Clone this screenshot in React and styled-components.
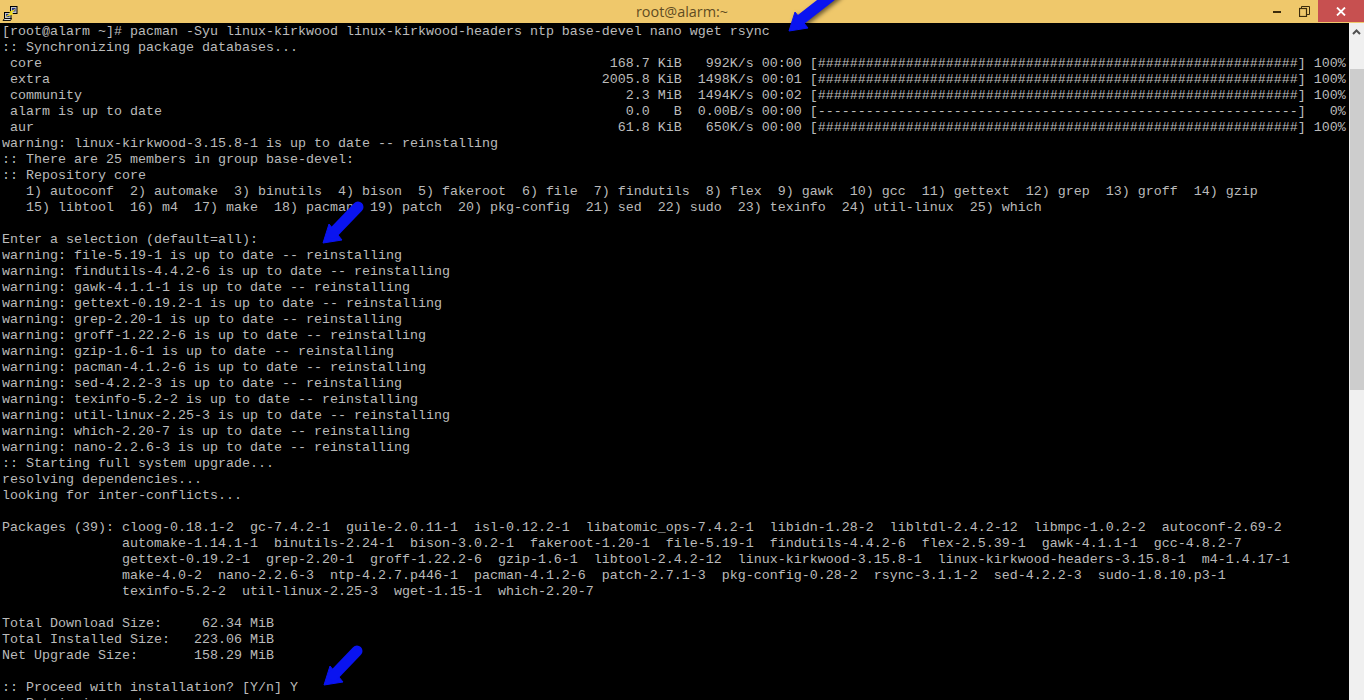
import React from 'react';
import styled, { createGlobalStyle } from 'styled-components';

const GlobalStyle = createGlobalStyle`
  html, body {
    margin: 0;
    padding: 0;
    height: 100%;
    overflow: hidden;
    background: #000;
  }
`;

const Window = styled.div`
  position: relative;
  display: flex;
  flex-direction: column;
  height: 100vh;
  overflow: hidden;
`;

const TitleBar = styled.div`
  position: relative;
  display: flex;
  align-items: center;
  justify-content: space-between;
  flex: 0 0 23px;
  background: #efc86b;
`;

const AppIcon = styled.svg`
  display: block;
  width: 16px;
  height: 16px;
  margin: 2px 0 0 2px;
`;

const Title = styled.div`
  position: absolute;
  left: 0;
  right: 0;
  top: 2px;
  text-align: center;
  font-family: 'Open Sans', 'Noto Sans', sans-serif;
  font-size: 14.4px;
  line-height: 20px;
  color: #5f4c22;
`;

const Controls = styled.div`
  display: flex;
  height: 22px;
  align-self: flex-start;
`;

const ControlButton = styled.div`
  display: flex;
  align-items: center;
  justify-content: center;
  width: ${(p) => p.$width}px;
  background: ${(p) => p.$bg || 'transparent'};
`;

const Body = styled.div`
  display: flex;
  flex: 1;
  min-height: 0;
`;

const Terminal = styled.div`
  flex: 1;
  min-width: 0;
  padding: 1px 0 0 2px;
  overflow: hidden;
  background: #000;
  color: #bbbbbb;
  font-family: 'Liberation Mono', 'DejaVu Sans Mono', monospace;
  font-size: 13.333px;
`;

const Line = styled.div`
  height: 16px;
  line-height: 16px;
  white-space: pre;
`;

const Scrollbar = styled.div`
  flex: 0 0 15px;
  background: #f0f0f0;
`;

const ScrollButton = styled.div`
  display: flex;
  align-items: center;
  justify-content: center;
  height: 17px;
  margin-bottom: 29px;
`;

const ScrollThumb = styled.div`
  height: 321px;
  margin-left: 1px;
  background: #cdcdcd;
`;

const Arrow = styled.svg`
  position: absolute;
  left: ${(p) => p.$tipX - 4}px;
  top: ${(p) => p.$tipY - 56}px;
  width: 60px;
  height: 60px;
  filter: drop-shadow(2px 2px 2px rgba(0, 0, 0, 0.55));
`;

const hashes = '#'.repeat(60);
const dashes = '-'.repeat(60);

const repoRow = (name, size, unit, rate, time, bar, pct) =>
  ' ' + name.padEnd(74) + size.padStart(6) + ' ' + unit.padStart(3) + rate.padStart(9) + ' ' + time + ' [' + bar + '] ' + pct.padStart(4);

const lines = [
  '[root@alarm ~]# pacman -Syu linux-kirkwood linux-kirkwood-headers ntp base-devel nano wget rsync',
  ':: Synchronizing package databases...',
  repoRow('core', '168.7', 'KiB', '992K/s', '00:00', hashes, '100%'),
  repoRow('extra', '2005.8', 'KiB', '1498K/s', '00:01', hashes, '100%'),
  repoRow('community', '2.3', 'MiB', '1494K/s', '00:02', hashes, '100%'),
  repoRow('alarm is up to date', '0.0', 'B', '0.00B/s', '00:00', dashes, '0%'),
  repoRow('aur', '61.8', 'KiB', '650K/s', '00:00', hashes, '100%'),
  'warning: linux-kirkwood-3.15.8-1 is up to date -- reinstalling',
  ':: There are 25 members in group base-devel:',
  ':: Repository core',
  '   1) autoconf  2) automake  3) binutils  4) bison  5) fakeroot  6) file  7) findutils  8) flex  9) gawk  10) gcc  11) gettext  12) grep  13) groff  14) gzip',
  '   15) libtool  16) m4  17) make  18) pacman  19) patch  20) pkg-config  21) sed  22) sudo  23) texinfo  24) util-linux  25) which',
  '',
  'Enter a selection (default=all):',
  'warning: file-5.19-1 is up to date -- reinstalling',
  'warning: findutils-4.4.2-6 is up to date -- reinstalling',
  'warning: gawk-4.1.1-1 is up to date -- reinstalling',
  'warning: gettext-0.19.2-1 is up to date -- reinstalling',
  'warning: grep-2.20-1 is up to date -- reinstalling',
  'warning: groff-1.22.2-6 is up to date -- reinstalling',
  'warning: gzip-1.6-1 is up to date -- reinstalling',
  'warning: pacman-4.1.2-6 is up to date -- reinstalling',
  'warning: sed-4.2.2-3 is up to date -- reinstalling',
  'warning: texinfo-5.2-2 is up to date -- reinstalling',
  'warning: util-linux-2.25-3 is up to date -- reinstalling',
  'warning: which-2.20-7 is up to date -- reinstalling',
  'warning: nano-2.2.6-3 is up to date -- reinstalling',
  ':: Starting full system upgrade...',
  'resolving dependencies...',
  'looking for inter-conflicts...',
  '',
  'Packages (39): cloog-0.18.1-2  gc-7.4.2-1  guile-2.0.11-1  isl-0.12.2-1  libatomic_ops-7.4.2-1  libidn-1.28-2  libltdl-2.4.2-12  libmpc-1.0.2-2  autoconf-2.69-2',
  '               automake-1.14.1-1  binutils-2.24-1  bison-3.0.2-1  fakeroot-1.20-1  file-5.19-1  findutils-4.4.2-6  flex-2.5.39-1  gawk-4.1.1-1  gcc-4.8.2-7',
  '               gettext-0.19.2-1  grep-2.20-1  groff-1.22.2-6  gzip-1.6-1  libtool-2.4.2-12  linux-kirkwood-3.15.8-1  linux-kirkwood-headers-3.15.8-1  m4-1.4.17-1',
  '               make-4.0-2  nano-2.2.6-3  ntp-4.2.7.p446-1  pacman-4.1.2-6  patch-2.7.1-3  pkg-config-0.28-2  rsync-3.1.1-2  sed-4.2.2-3  sudo-1.8.10.p3-1',
  '               texinfo-5.2-2  util-linux-2.25-3  wget-1.15-1  which-2.20-7',
  '',
  'Total Download Size:     62.34 MiB',
  'Total Installed Size:   223.06 MiB',
  'Net Upgrade Size:       158.29 MiB',
  '',
  ':: Proceed with installation? [Y/n] Y',
  ':: Retrieving packages ...',
];

// tip position on the page, tail relative to the tip
const arrows = [
  { tipX: 789, tipY: 31, dx: 46, dy: -38 },
  { tipX: 323, tipY: 243, dx: 35, dy: -36 },
  { tipX: 324, tipY: 685, dx: 33, dy: -34 },
];

const PuttyIcon = () => (
  <AppIcon viewBox="0 0 16 16">
    <rect x="8.5" y="1.5" width="6.5" height="7" fill="#c4c4c4" stroke="#000" />
    <rect x="10" y="3" width="3.5" height="3.5" fill="#24348c" />
    <rect x="2.5" y="7.5" width="6.5" height="6" fill="#c4c4c4" stroke="#000" />
    <rect x="4" y="9" width="3.5" height="3" fill="#24348c" />
    <path d="M1 15.5 L2.5 13.5 H9.5 L8.5 15.5 Z" fill="#e0e0e0" stroke="#000" strokeWidth="0.9" />
    <path d="M13 4.5 L7.5 7 L9 8 L4 11.5 L11 9 L9.5 7.8 Z" fill="#ffe81f" stroke="#ffe81f" strokeWidth="0.6" />
  </AppIcon>
);

const App = () => (
  <Window>
    <GlobalStyle />
    <TitleBar>
      <PuttyIcon />
      <Title>root@alarm:~</Title>
      <Controls>
        <ControlButton $width={26}>
          <svg width="9" height="3" viewBox="0 0 9 3">
            <rect width="8" height="2" y="1" fill="#3c2c0c" />
          </svg>
        </ControlButton>
        <ControlButton $width={28}>
          <svg width="11" height="11" viewBox="0 0 11 11" fill="none" stroke="#3c2c0c">
            <rect x="0.5" y="2.5" width="7" height="8" strokeWidth="1.2" />
            <path d="M2.5 2.5 V0.5 H10.5 V8.5 H7.5" strokeWidth="1" />
          </svg>
        </ControlButton>
        <ControlButton $width={46} $bg="#c75050">
          <svg width="10" height="9" viewBox="0 0 10 9" stroke="#fff" strokeWidth="1.8">
            <path d="M1 0.5 L9 8.5 M9 0.5 L1 8.5" />
          </svg>
        </ControlButton>
      </Controls>
    </TitleBar>
    <Body>
      <Terminal>
        {lines.map((text, i) => (
          <Line key={i}>{text}</Line>
        ))}
      </Terminal>
      <Scrollbar>
        <ScrollButton>
          <svg width="9" height="6" viewBox="0 0 9 6" fill="none" stroke="#505050" strokeWidth="2">
            <path d="M1 5 L4.5 1.5 L8 5" />
          </svg>
        </ScrollButton>
        <ScrollThumb />
      </Scrollbar>
    </Body>
    {arrows.map((a) => (
      <Arrow key={a.tipX + a.tipY} $tipX={a.tipX} $tipY={a.tipY} viewBox="0 0 60 60">
        <path d="M4 56 L10 37 L23 53 Z" fill="#0a14f0" stroke="#0a14f0" strokeWidth="1" strokeLinejoin="round" />
        <line x1="14" y1="46" x2={4 + a.dx} y2={56 + a.dy} stroke="#0a14f0" strokeWidth="11" strokeLinecap="round" />
      </Arrow>
    ))}
  </Window>
);

export default App;
